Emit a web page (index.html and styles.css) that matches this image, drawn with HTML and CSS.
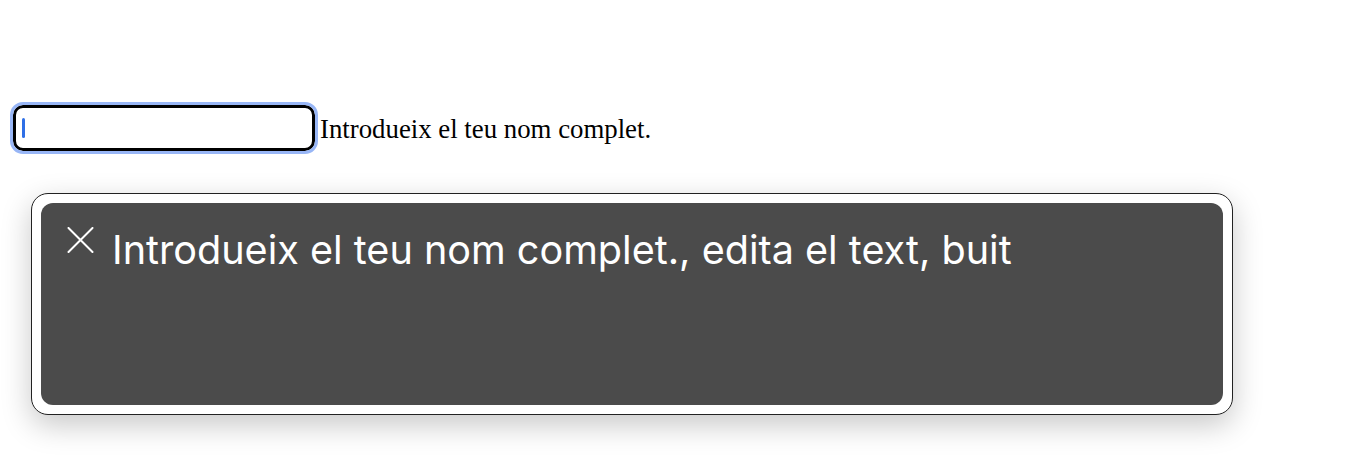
FILE: index.html
```html
<!DOCTYPE html>
<html>
<head>
<meta charset="utf-8">
<link rel="stylesheet" href="styles.css">
</head>
<body>
<div class="page">
  <div class="row">
    <div class="field"><span class="caret"></span></div>
    <label class="label">Introdueix el teu nom complet.</label>
  </div>
  <div class="popup">
    <div class="panel">
      <svg class="close" width="27" height="26" viewBox="0 0 27 26"><path d="M1.5 1 L25.5 25 M25.5 1 L1.5 25" stroke="#fff" stroke-width="2" stroke-linecap="round" fill="none"/></svg>
      <div class="msg">Introdueix el teu nom complet., edita el text, buit</div>
    </div>
  </div>
</div>
</body>
</html>
```
FILE: styles.css
```css
html, body { margin: 0; padding: 0; background: #fff; }
.page { padding: 105px 0 60px 13px; }
.row { display: flex; align-items: center; }
.field {
  box-sizing: border-box;
  width: 302px; height: 46px;
  border: 3px solid #000;
  border-radius: 10px;
  outline: 3px solid #98b6f6;
  outline-offset: 0;
  display: flex; align-items: center;
  padding-left: 6px;
}
.caret { width: 3px; height: 20px; background: #2f6fe6; border-radius: 2px; }
.label {
  font-family: "Liberation Serif", "Times New Roman", serif;
  font-size: 26.8px;
  color: #000;
  margin-left: 5px;
  margin-top: 2px;
}
.popup {
  box-sizing: border-box;
  margin: 42px 0 0 18px;
  width: 1202px; height: 222px;
  background: #fff;
  border: 1px solid #222;
  border-radius: 17px;
  padding: 9px;
  box-shadow: 0 10px 30px rgba(0,0,0,0.22);
}
.panel {
  height: 100%;
  background: #4b4b4b;
  border-radius: 12px;
  display: flex;
  align-items: flex-start;
  padding: 23px 0 0 26px;
  box-sizing: border-box;
}
.close { flex: none; margin-top: 1px; }
.msg {
  font-family: Inter, "Noto Sans", sans-serif;
  font-size: 39.6px;
  color: #fff;
  margin-left: 18px;
  line-height: 48px;
}
```
